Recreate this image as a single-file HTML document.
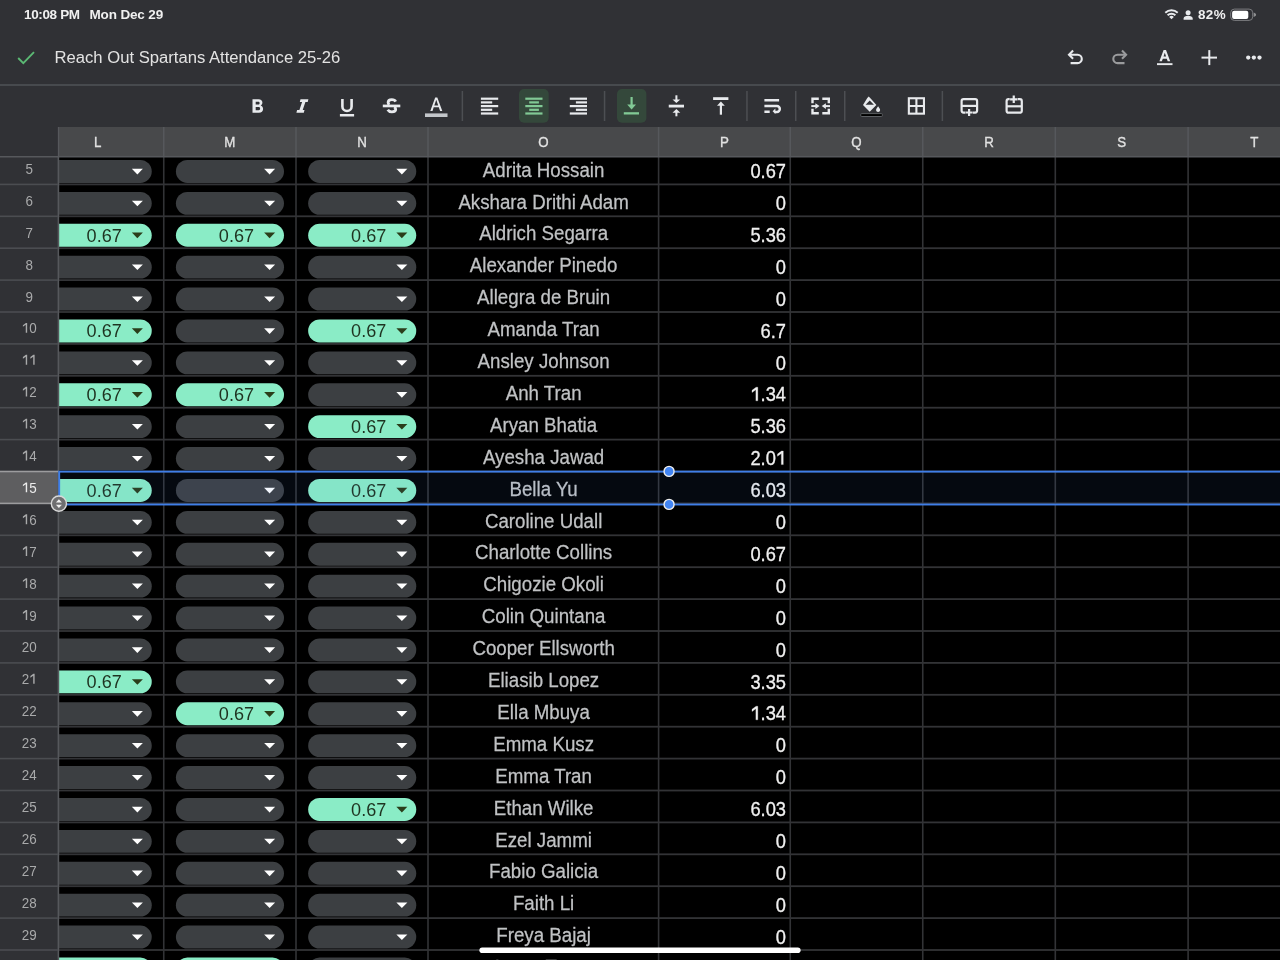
<!DOCTYPE html><html><head><meta charset="utf-8"><style>
*{margin:0;padding:0;box-sizing:border-box}
html,body{width:1280px;height:960px;overflow:hidden;background:#303135;font-family:"Liberation Sans",sans-serif}
.a{position:absolute}
.t{position:absolute;white-space:nowrap;line-height:1}
svg text{font-family:"Liberation Sans",sans-serif}
svg{will-change:transform}
</style></head><body>
<svg class="a" style="left:0;top:0" width="1280" height="960" viewBox="0 0 1280 960">
<rect x="58" y="127" width="1222" height="30" fill="#48494b"/>
<rect x="59" y="157" width="1221" height="803" fill="#000"/>
<rect x="163.00" y="127" width="1.5" height="30" fill="#56585c"/>
<rect x="162.95" y="157" width="1.6" height="803" fill="#323336"/>
<rect x="295.25" y="127" width="1.5" height="30" fill="#56585c"/>
<rect x="295.20" y="157" width="1.6" height="803" fill="#323336"/>
<rect x="427.25" y="127" width="1.5" height="30" fill="#56585c"/>
<rect x="427.20" y="157" width="1.6" height="803" fill="#323336"/>
<rect x="657.85" y="127" width="1.5" height="30" fill="#56585c"/>
<rect x="657.80" y="157" width="1.6" height="803" fill="#323336"/>
<rect x="789.50" y="127" width="1.5" height="30" fill="#56585c"/>
<rect x="789.45" y="157" width="1.6" height="803" fill="#323336"/>
<rect x="922.00" y="127" width="1.5" height="30" fill="#56585c"/>
<rect x="921.95" y="157" width="1.6" height="803" fill="#323336"/>
<rect x="1054.55" y="127" width="1.5" height="30" fill="#56585c"/>
<rect x="1054.50" y="157" width="1.6" height="803" fill="#323336"/>
<rect x="1187.35" y="127" width="1.5" height="30" fill="#56585c"/>
<rect x="1187.30" y="157" width="1.6" height="803" fill="#323336"/>
<rect x="59" y="183.50" width="1221" height="1.8" fill="#323336"/>
<rect x="59" y="215.40" width="1221" height="1.8" fill="#323336"/>
<rect x="59" y="247.30" width="1221" height="1.8" fill="#323336"/>
<rect x="59" y="279.20" width="1221" height="1.8" fill="#323336"/>
<rect x="59" y="311.10" width="1221" height="1.8" fill="#323336"/>
<rect x="59" y="343.00" width="1221" height="1.8" fill="#323336"/>
<rect x="59" y="374.90" width="1221" height="1.8" fill="#323336"/>
<rect x="59" y="406.80" width="1221" height="1.8" fill="#323336"/>
<rect x="59" y="438.70" width="1221" height="1.8" fill="#323336"/>
<rect x="59" y="470.60" width="1221" height="1.8" fill="#323336"/>
<rect x="59" y="502.50" width="1221" height="1.8" fill="#323336"/>
<rect x="59" y="534.40" width="1221" height="1.8" fill="#323336"/>
<rect x="59" y="566.30" width="1221" height="1.8" fill="#323336"/>
<rect x="59" y="598.20" width="1221" height="1.8" fill="#323336"/>
<rect x="59" y="630.10" width="1221" height="1.8" fill="#323336"/>
<rect x="59" y="662.00" width="1221" height="1.8" fill="#323336"/>
<rect x="59" y="693.90" width="1221" height="1.8" fill="#323336"/>
<rect x="59" y="725.80" width="1221" height="1.8" fill="#323336"/>
<rect x="59" y="757.70" width="1221" height="1.8" fill="#323336"/>
<rect x="59" y="789.60" width="1221" height="1.8" fill="#323336"/>
<rect x="59" y="821.50" width="1221" height="1.8" fill="#323336"/>
<rect x="59" y="853.40" width="1221" height="1.8" fill="#323336"/>
<rect x="59" y="885.30" width="1221" height="1.8" fill="#323336"/>
<rect x="59" y="917.20" width="1221" height="1.8" fill="#323336"/>
<rect x="59" y="949.10" width="1221" height="1.8" fill="#323336"/>
<rect x="43.65" y="160.00" width="108.10" height="22.90" rx="11.45" fill="#3c3f42"/>
<path d="M131.85 168.80 h11.00 l-5.50 5.60 z" fill="#ffffff"/>
<rect x="175.90" y="160.00" width="108.10" height="22.90" rx="11.45" fill="#3c3f42"/>
<path d="M264.10 168.80 h11.00 l-5.50 5.60 z" fill="#ffffff"/>
<rect x="308.15" y="160.00" width="108.10" height="22.90" rx="11.45" fill="#3c3f42"/>
<path d="M396.35 168.80 h11.00 l-5.50 5.60 z" fill="#ffffff"/>
<text transform="translate(543.60 176.60) scale(0.945 1)" font-size="19.8" fill="#c0c2c4" stroke="#c0c2c4" stroke-width="0.25" text-anchor="middle">Adrita Hossain</text>
<g transform="translate(750.41 178.10) scale(0.925 1)" fill="#f0f0f0" stroke="#f0f0f0" stroke-width="0.30"><text x="0.00" y="0" font-size="19.80">0.67</text></g>
<rect x="43.65" y="191.90" width="108.10" height="22.90" rx="11.45" fill="#3c3f42"/>
<path d="M131.85 200.70 h11.00 l-5.50 5.60 z" fill="#ffffff"/>
<rect x="175.90" y="191.90" width="108.10" height="22.90" rx="11.45" fill="#3c3f42"/>
<path d="M264.10 200.70 h11.00 l-5.50 5.60 z" fill="#ffffff"/>
<rect x="308.15" y="191.90" width="108.10" height="22.90" rx="11.45" fill="#3c3f42"/>
<path d="M396.35 200.70 h11.00 l-5.50 5.60 z" fill="#ffffff"/>
<text transform="translate(543.60 208.50) scale(0.945 1)" font-size="19.8" fill="#c0c2c4" stroke="#c0c2c4" stroke-width="0.25" text-anchor="middle">Akshara Drithi Adam</text>
<g transform="translate(775.87 210.00) scale(0.925 1)" fill="#f0f0f0" stroke="#f0f0f0" stroke-width="0.30"><text x="0.00" y="0" font-size="19.80">0</text></g>
<rect x="43.65" y="223.80" width="108.10" height="22.90" rx="11.45" fill="#8aecc6"/>
<path d="M131.85 232.60 h11.00 l-5.50 5.60 z" fill="#2a3d1a"/>
<text transform="translate(121.85 241.60) scale(0.99 1)" font-size="18.3" fill="#1e3320" text-anchor="end">0.67</text>
<rect x="175.90" y="223.80" width="108.10" height="22.90" rx="11.45" fill="#8aecc6"/>
<path d="M264.10 232.60 h11.00 l-5.50 5.60 z" fill="#2a3d1a"/>
<text transform="translate(254.10 241.60) scale(0.99 1)" font-size="18.3" fill="#1e3320" text-anchor="end">0.67</text>
<rect x="308.15" y="223.80" width="108.10" height="22.90" rx="11.45" fill="#8aecc6"/>
<path d="M396.35 232.60 h11.00 l-5.50 5.60 z" fill="#2a3d1a"/>
<text transform="translate(386.35 241.60) scale(0.99 1)" font-size="18.3" fill="#1e3320" text-anchor="end">0.67</text>
<text transform="translate(543.60 240.40) scale(0.945 1)" font-size="19.8" fill="#c0c2c4" stroke="#c0c2c4" stroke-width="0.25" text-anchor="middle">Aldrich Segarra</text>
<g transform="translate(750.41 241.90) scale(0.925 1)" fill="#f0f0f0" stroke="#f0f0f0" stroke-width="0.30"><text x="0.00" y="0" font-size="19.80">5.36</text></g>
<rect x="43.65" y="255.70" width="108.10" height="22.90" rx="11.45" fill="#3c3f42"/>
<path d="M131.85 264.50 h11.00 l-5.50 5.60 z" fill="#ffffff"/>
<rect x="175.90" y="255.70" width="108.10" height="22.90" rx="11.45" fill="#3c3f42"/>
<path d="M264.10 264.50 h11.00 l-5.50 5.60 z" fill="#ffffff"/>
<rect x="308.15" y="255.70" width="108.10" height="22.90" rx="11.45" fill="#3c3f42"/>
<path d="M396.35 264.50 h11.00 l-5.50 5.60 z" fill="#ffffff"/>
<text transform="translate(543.60 272.30) scale(0.945 1)" font-size="19.8" fill="#c0c2c4" stroke="#c0c2c4" stroke-width="0.25" text-anchor="middle">Alexander Pinedo</text>
<g transform="translate(775.87 273.80) scale(0.925 1)" fill="#f0f0f0" stroke="#f0f0f0" stroke-width="0.30"><text x="0.00" y="0" font-size="19.80">0</text></g>
<rect x="43.65" y="287.60" width="108.10" height="22.90" rx="11.45" fill="#3c3f42"/>
<path d="M131.85 296.40 h11.00 l-5.50 5.60 z" fill="#ffffff"/>
<rect x="175.90" y="287.60" width="108.10" height="22.90" rx="11.45" fill="#3c3f42"/>
<path d="M264.10 296.40 h11.00 l-5.50 5.60 z" fill="#ffffff"/>
<rect x="308.15" y="287.60" width="108.10" height="22.90" rx="11.45" fill="#3c3f42"/>
<path d="M396.35 296.40 h11.00 l-5.50 5.60 z" fill="#ffffff"/>
<text transform="translate(543.60 304.20) scale(0.945 1)" font-size="19.8" fill="#c0c2c4" stroke="#c0c2c4" stroke-width="0.25" text-anchor="middle">Allegra de Bruin</text>
<g transform="translate(775.87 305.70) scale(0.925 1)" fill="#f0f0f0" stroke="#f0f0f0" stroke-width="0.30"><text x="0.00" y="0" font-size="19.80">0</text></g>
<rect x="43.65" y="319.50" width="108.10" height="22.90" rx="11.45" fill="#8aecc6"/>
<path d="M131.85 328.30 h11.00 l-5.50 5.60 z" fill="#2a3d1a"/>
<text transform="translate(121.85 337.30) scale(0.99 1)" font-size="18.3" fill="#1e3320" text-anchor="end">0.67</text>
<rect x="175.90" y="319.50" width="108.10" height="22.90" rx="11.45" fill="#3c3f42"/>
<path d="M264.10 328.30 h11.00 l-5.50 5.60 z" fill="#ffffff"/>
<rect x="308.15" y="319.50" width="108.10" height="22.90" rx="11.45" fill="#8aecc6"/>
<path d="M396.35 328.30 h11.00 l-5.50 5.60 z" fill="#2a3d1a"/>
<text transform="translate(386.35 337.30) scale(0.99 1)" font-size="18.3" fill="#1e3320" text-anchor="end">0.67</text>
<text transform="translate(543.60 336.10) scale(0.945 1)" font-size="19.8" fill="#c0c2c4" stroke="#c0c2c4" stroke-width="0.25" text-anchor="middle">Amanda Tran</text>
<g transform="translate(760.59 337.60) scale(0.925 1)" fill="#f0f0f0" stroke="#f0f0f0" stroke-width="0.30"><text x="0.00" y="0" font-size="19.80">6.7</text></g>
<rect x="43.65" y="351.40" width="108.10" height="22.90" rx="11.45" fill="#3c3f42"/>
<path d="M131.85 360.20 h11.00 l-5.50 5.60 z" fill="#ffffff"/>
<rect x="175.90" y="351.40" width="108.10" height="22.90" rx="11.45" fill="#3c3f42"/>
<path d="M264.10 360.20 h11.00 l-5.50 5.60 z" fill="#ffffff"/>
<rect x="308.15" y="351.40" width="108.10" height="22.90" rx="11.45" fill="#3c3f42"/>
<path d="M396.35 360.20 h11.00 l-5.50 5.60 z" fill="#ffffff"/>
<text transform="translate(543.60 368.00) scale(0.945 1)" font-size="19.8" fill="#c0c2c4" stroke="#c0c2c4" stroke-width="0.25" text-anchor="middle">Ansley Johnson</text>
<g transform="translate(775.87 369.50) scale(0.925 1)" fill="#f0f0f0" stroke="#f0f0f0" stroke-width="0.30"><text x="0.00" y="0" font-size="19.80">0</text></g>
<rect x="43.65" y="383.30" width="108.10" height="22.90" rx="11.45" fill="#8aecc6"/>
<path d="M131.85 392.10 h11.00 l-5.50 5.60 z" fill="#2a3d1a"/>
<text transform="translate(121.85 401.10) scale(0.99 1)" font-size="18.3" fill="#1e3320" text-anchor="end">0.67</text>
<rect x="175.90" y="383.30" width="108.10" height="22.90" rx="11.45" fill="#8aecc6"/>
<path d="M264.10 392.10 h11.00 l-5.50 5.60 z" fill="#2a3d1a"/>
<text transform="translate(254.10 401.10) scale(0.99 1)" font-size="18.3" fill="#1e3320" text-anchor="end">0.67</text>
<rect x="308.15" y="383.30" width="108.10" height="22.90" rx="11.45" fill="#3c3f42"/>
<path d="M396.35 392.10 h11.00 l-5.50 5.60 z" fill="#ffffff"/>
<text transform="translate(543.60 399.90) scale(0.945 1)" font-size="19.8" fill="#c0c2c4" stroke="#c0c2c4" stroke-width="0.25" text-anchor="middle">Anh Tran</text>
<g transform="translate(750.41 401.40) scale(0.925 1)" fill="#f0f0f0" stroke="#f0f0f0" stroke-width="0.30"><path d="M8.00 -14.18 V-0.6 H5.92 V-11.58 L1.72 -8.91 V-11.09 L6.14 -14.18 Z"/><text x="11.01" y="0" font-size="19.80">.34</text></g>
<rect x="43.65" y="415.20" width="108.10" height="22.90" rx="11.45" fill="#3c3f42"/>
<path d="M131.85 424.00 h11.00 l-5.50 5.60 z" fill="#ffffff"/>
<rect x="175.90" y="415.20" width="108.10" height="22.90" rx="11.45" fill="#3c3f42"/>
<path d="M264.10 424.00 h11.00 l-5.50 5.60 z" fill="#ffffff"/>
<rect x="308.15" y="415.20" width="108.10" height="22.90" rx="11.45" fill="#8aecc6"/>
<path d="M396.35 424.00 h11.00 l-5.50 5.60 z" fill="#2a3d1a"/>
<text transform="translate(386.35 433.00) scale(0.99 1)" font-size="18.3" fill="#1e3320" text-anchor="end">0.67</text>
<text transform="translate(543.60 431.80) scale(0.945 1)" font-size="19.8" fill="#c0c2c4" stroke="#c0c2c4" stroke-width="0.25" text-anchor="middle">Aryan Bhatia</text>
<g transform="translate(750.41 433.30) scale(0.925 1)" fill="#f0f0f0" stroke="#f0f0f0" stroke-width="0.30"><text x="0.00" y="0" font-size="19.80">5.36</text></g>
<rect x="43.65" y="447.10" width="108.10" height="22.90" rx="11.45" fill="#3c3f42"/>
<path d="M131.85 455.90 h11.00 l-5.50 5.60 z" fill="#ffffff"/>
<rect x="175.90" y="447.10" width="108.10" height="22.90" rx="11.45" fill="#3c3f42"/>
<path d="M264.10 455.90 h11.00 l-5.50 5.60 z" fill="#ffffff"/>
<rect x="308.15" y="447.10" width="108.10" height="22.90" rx="11.45" fill="#3c3f42"/>
<path d="M396.35 455.90 h11.00 l-5.50 5.60 z" fill="#ffffff"/>
<text transform="translate(543.60 463.70) scale(0.945 1)" font-size="19.8" fill="#c0c2c4" stroke="#c0c2c4" stroke-width="0.25" text-anchor="middle">Ayesha Jawad</text>
<g transform="translate(750.41 465.20) scale(0.925 1)" fill="#f0f0f0" stroke="#f0f0f0" stroke-width="0.30"><text x="0.00" y="0" font-size="19.80">2.0</text><path d="M35.52 -14.18 V-0.6 H33.44 V-11.58 L29.24 -8.91 V-11.09 L33.66 -14.18 Z"/></g>
<rect x="43.65" y="479.00" width="108.10" height="22.90" rx="11.45" fill="#8aecc6"/>
<path d="M131.85 487.80 h11.00 l-5.50 5.60 z" fill="#2a3d1a"/>
<text transform="translate(121.85 496.80) scale(0.99 1)" font-size="18.3" fill="#1e3320" text-anchor="end">0.67</text>
<rect x="175.90" y="479.00" width="108.10" height="22.90" rx="11.45" fill="#3c3f42"/>
<path d="M264.10 487.80 h11.00 l-5.50 5.60 z" fill="#ffffff"/>
<rect x="308.15" y="479.00" width="108.10" height="22.90" rx="11.45" fill="#8aecc6"/>
<path d="M396.35 487.80 h11.00 l-5.50 5.60 z" fill="#2a3d1a"/>
<text transform="translate(386.35 496.80) scale(0.99 1)" font-size="18.3" fill="#1e3320" text-anchor="end">0.67</text>
<text transform="translate(543.60 495.60) scale(0.945 1)" font-size="19.8" fill="#c0c2c4" stroke="#c0c2c4" stroke-width="0.25" text-anchor="middle">Bella Yu</text>
<g transform="translate(750.41 497.10) scale(0.925 1)" fill="#f0f0f0" stroke="#f0f0f0" stroke-width="0.30"><text x="0.00" y="0" font-size="19.80">6.03</text></g>
<rect x="43.65" y="510.90" width="108.10" height="22.90" rx="11.45" fill="#3c3f42"/>
<path d="M131.85 519.70 h11.00 l-5.50 5.60 z" fill="#ffffff"/>
<rect x="175.90" y="510.90" width="108.10" height="22.90" rx="11.45" fill="#3c3f42"/>
<path d="M264.10 519.70 h11.00 l-5.50 5.60 z" fill="#ffffff"/>
<rect x="308.15" y="510.90" width="108.10" height="22.90" rx="11.45" fill="#3c3f42"/>
<path d="M396.35 519.70 h11.00 l-5.50 5.60 z" fill="#ffffff"/>
<text transform="translate(543.60 527.50) scale(0.945 1)" font-size="19.8" fill="#c0c2c4" stroke="#c0c2c4" stroke-width="0.25" text-anchor="middle">Caroline Udall</text>
<g transform="translate(775.87 529.00) scale(0.925 1)" fill="#f0f0f0" stroke="#f0f0f0" stroke-width="0.30"><text x="0.00" y="0" font-size="19.80">0</text></g>
<rect x="43.65" y="542.80" width="108.10" height="22.90" rx="11.45" fill="#3c3f42"/>
<path d="M131.85 551.60 h11.00 l-5.50 5.60 z" fill="#ffffff"/>
<rect x="175.90" y="542.80" width="108.10" height="22.90" rx="11.45" fill="#3c3f42"/>
<path d="M264.10 551.60 h11.00 l-5.50 5.60 z" fill="#ffffff"/>
<rect x="308.15" y="542.80" width="108.10" height="22.90" rx="11.45" fill="#3c3f42"/>
<path d="M396.35 551.60 h11.00 l-5.50 5.60 z" fill="#ffffff"/>
<text transform="translate(543.60 559.40) scale(0.945 1)" font-size="19.8" fill="#c0c2c4" stroke="#c0c2c4" stroke-width="0.25" text-anchor="middle">Charlotte Collins</text>
<g transform="translate(750.41 560.90) scale(0.925 1)" fill="#f0f0f0" stroke="#f0f0f0" stroke-width="0.30"><text x="0.00" y="0" font-size="19.80">0.67</text></g>
<rect x="43.65" y="574.70" width="108.10" height="22.90" rx="11.45" fill="#3c3f42"/>
<path d="M131.85 583.50 h11.00 l-5.50 5.60 z" fill="#ffffff"/>
<rect x="175.90" y="574.70" width="108.10" height="22.90" rx="11.45" fill="#3c3f42"/>
<path d="M264.10 583.50 h11.00 l-5.50 5.60 z" fill="#ffffff"/>
<rect x="308.15" y="574.70" width="108.10" height="22.90" rx="11.45" fill="#3c3f42"/>
<path d="M396.35 583.50 h11.00 l-5.50 5.60 z" fill="#ffffff"/>
<text transform="translate(543.60 591.30) scale(0.945 1)" font-size="19.8" fill="#c0c2c4" stroke="#c0c2c4" stroke-width="0.25" text-anchor="middle">Chigozie Okoli</text>
<g transform="translate(775.87 592.80) scale(0.925 1)" fill="#f0f0f0" stroke="#f0f0f0" stroke-width="0.30"><text x="0.00" y="0" font-size="19.80">0</text></g>
<rect x="43.65" y="606.60" width="108.10" height="22.90" rx="11.45" fill="#3c3f42"/>
<path d="M131.85 615.40 h11.00 l-5.50 5.60 z" fill="#ffffff"/>
<rect x="175.90" y="606.60" width="108.10" height="22.90" rx="11.45" fill="#3c3f42"/>
<path d="M264.10 615.40 h11.00 l-5.50 5.60 z" fill="#ffffff"/>
<rect x="308.15" y="606.60" width="108.10" height="22.90" rx="11.45" fill="#3c3f42"/>
<path d="M396.35 615.40 h11.00 l-5.50 5.60 z" fill="#ffffff"/>
<text transform="translate(543.60 623.20) scale(0.945 1)" font-size="19.8" fill="#c0c2c4" stroke="#c0c2c4" stroke-width="0.25" text-anchor="middle">Colin Quintana</text>
<g transform="translate(775.87 624.70) scale(0.925 1)" fill="#f0f0f0" stroke="#f0f0f0" stroke-width="0.30"><text x="0.00" y="0" font-size="19.80">0</text></g>
<rect x="43.65" y="638.50" width="108.10" height="22.90" rx="11.45" fill="#3c3f42"/>
<path d="M131.85 647.30 h11.00 l-5.50 5.60 z" fill="#ffffff"/>
<rect x="175.90" y="638.50" width="108.10" height="22.90" rx="11.45" fill="#3c3f42"/>
<path d="M264.10 647.30 h11.00 l-5.50 5.60 z" fill="#ffffff"/>
<rect x="308.15" y="638.50" width="108.10" height="22.90" rx="11.45" fill="#3c3f42"/>
<path d="M396.35 647.30 h11.00 l-5.50 5.60 z" fill="#ffffff"/>
<text transform="translate(543.60 655.10) scale(0.945 1)" font-size="19.8" fill="#c0c2c4" stroke="#c0c2c4" stroke-width="0.25" text-anchor="middle">Cooper Ellsworth</text>
<g transform="translate(775.87 656.60) scale(0.925 1)" fill="#f0f0f0" stroke="#f0f0f0" stroke-width="0.30"><text x="0.00" y="0" font-size="19.80">0</text></g>
<rect x="43.65" y="670.40" width="108.10" height="22.90" rx="11.45" fill="#8aecc6"/>
<path d="M131.85 679.20 h11.00 l-5.50 5.60 z" fill="#2a3d1a"/>
<text transform="translate(121.85 688.20) scale(0.99 1)" font-size="18.3" fill="#1e3320" text-anchor="end">0.67</text>
<rect x="175.90" y="670.40" width="108.10" height="22.90" rx="11.45" fill="#3c3f42"/>
<path d="M264.10 679.20 h11.00 l-5.50 5.60 z" fill="#ffffff"/>
<rect x="308.15" y="670.40" width="108.10" height="22.90" rx="11.45" fill="#3c3f42"/>
<path d="M396.35 679.20 h11.00 l-5.50 5.60 z" fill="#ffffff"/>
<text transform="translate(543.60 687.00) scale(0.945 1)" font-size="19.8" fill="#c0c2c4" stroke="#c0c2c4" stroke-width="0.25" text-anchor="middle">Eliasib Lopez</text>
<g transform="translate(750.41 688.50) scale(0.925 1)" fill="#f0f0f0" stroke="#f0f0f0" stroke-width="0.30"><text x="0.00" y="0" font-size="19.80">3.35</text></g>
<rect x="43.65" y="702.30" width="108.10" height="22.90" rx="11.45" fill="#3c3f42"/>
<path d="M131.85 711.10 h11.00 l-5.50 5.60 z" fill="#ffffff"/>
<rect x="175.90" y="702.30" width="108.10" height="22.90" rx="11.45" fill="#8aecc6"/>
<path d="M264.10 711.10 h11.00 l-5.50 5.60 z" fill="#2a3d1a"/>
<text transform="translate(254.10 720.10) scale(0.99 1)" font-size="18.3" fill="#1e3320" text-anchor="end">0.67</text>
<rect x="308.15" y="702.30" width="108.10" height="22.90" rx="11.45" fill="#3c3f42"/>
<path d="M396.35 711.10 h11.00 l-5.50 5.60 z" fill="#ffffff"/>
<text transform="translate(543.60 718.90) scale(0.945 1)" font-size="19.8" fill="#c0c2c4" stroke="#c0c2c4" stroke-width="0.25" text-anchor="middle">Ella Mbuya</text>
<g transform="translate(750.41 720.40) scale(0.925 1)" fill="#f0f0f0" stroke="#f0f0f0" stroke-width="0.30"><path d="M8.00 -14.18 V-0.6 H5.92 V-11.58 L1.72 -8.91 V-11.09 L6.14 -14.18 Z"/><text x="11.01" y="0" font-size="19.80">.34</text></g>
<rect x="43.65" y="734.20" width="108.10" height="22.90" rx="11.45" fill="#3c3f42"/>
<path d="M131.85 743.00 h11.00 l-5.50 5.60 z" fill="#ffffff"/>
<rect x="175.90" y="734.20" width="108.10" height="22.90" rx="11.45" fill="#3c3f42"/>
<path d="M264.10 743.00 h11.00 l-5.50 5.60 z" fill="#ffffff"/>
<rect x="308.15" y="734.20" width="108.10" height="22.90" rx="11.45" fill="#3c3f42"/>
<path d="M396.35 743.00 h11.00 l-5.50 5.60 z" fill="#ffffff"/>
<text transform="translate(543.60 750.80) scale(0.945 1)" font-size="19.8" fill="#c0c2c4" stroke="#c0c2c4" stroke-width="0.25" text-anchor="middle">Emma Kusz</text>
<g transform="translate(775.87 752.30) scale(0.925 1)" fill="#f0f0f0" stroke="#f0f0f0" stroke-width="0.30"><text x="0.00" y="0" font-size="19.80">0</text></g>
<rect x="43.65" y="766.10" width="108.10" height="22.90" rx="11.45" fill="#3c3f42"/>
<path d="M131.85 774.90 h11.00 l-5.50 5.60 z" fill="#ffffff"/>
<rect x="175.90" y="766.10" width="108.10" height="22.90" rx="11.45" fill="#3c3f42"/>
<path d="M264.10 774.90 h11.00 l-5.50 5.60 z" fill="#ffffff"/>
<rect x="308.15" y="766.10" width="108.10" height="22.90" rx="11.45" fill="#3c3f42"/>
<path d="M396.35 774.90 h11.00 l-5.50 5.60 z" fill="#ffffff"/>
<text transform="translate(543.60 782.70) scale(0.945 1)" font-size="19.8" fill="#c0c2c4" stroke="#c0c2c4" stroke-width="0.25" text-anchor="middle">Emma Tran</text>
<g transform="translate(775.87 784.20) scale(0.925 1)" fill="#f0f0f0" stroke="#f0f0f0" stroke-width="0.30"><text x="0.00" y="0" font-size="19.80">0</text></g>
<rect x="43.65" y="798.00" width="108.10" height="22.90" rx="11.45" fill="#3c3f42"/>
<path d="M131.85 806.80 h11.00 l-5.50 5.60 z" fill="#ffffff"/>
<rect x="175.90" y="798.00" width="108.10" height="22.90" rx="11.45" fill="#3c3f42"/>
<path d="M264.10 806.80 h11.00 l-5.50 5.60 z" fill="#ffffff"/>
<rect x="308.15" y="798.00" width="108.10" height="22.90" rx="11.45" fill="#8aecc6"/>
<path d="M396.35 806.80 h11.00 l-5.50 5.60 z" fill="#2a3d1a"/>
<text transform="translate(386.35 815.80) scale(0.99 1)" font-size="18.3" fill="#1e3320" text-anchor="end">0.67</text>
<text transform="translate(543.60 814.60) scale(0.945 1)" font-size="19.8" fill="#c0c2c4" stroke="#c0c2c4" stroke-width="0.25" text-anchor="middle">Ethan Wilke</text>
<g transform="translate(750.41 816.10) scale(0.925 1)" fill="#f0f0f0" stroke="#f0f0f0" stroke-width="0.30"><text x="0.00" y="0" font-size="19.80">6.03</text></g>
<rect x="43.65" y="829.90" width="108.10" height="22.90" rx="11.45" fill="#3c3f42"/>
<path d="M131.85 838.70 h11.00 l-5.50 5.60 z" fill="#ffffff"/>
<rect x="175.90" y="829.90" width="108.10" height="22.90" rx="11.45" fill="#3c3f42"/>
<path d="M264.10 838.70 h11.00 l-5.50 5.60 z" fill="#ffffff"/>
<rect x="308.15" y="829.90" width="108.10" height="22.90" rx="11.45" fill="#3c3f42"/>
<path d="M396.35 838.70 h11.00 l-5.50 5.60 z" fill="#ffffff"/>
<text transform="translate(543.60 846.50) scale(0.945 1)" font-size="19.8" fill="#c0c2c4" stroke="#c0c2c4" stroke-width="0.25" text-anchor="middle">Ezel Jammi</text>
<g transform="translate(775.87 848.00) scale(0.925 1)" fill="#f0f0f0" stroke="#f0f0f0" stroke-width="0.30"><text x="0.00" y="0" font-size="19.80">0</text></g>
<rect x="43.65" y="861.80" width="108.10" height="22.90" rx="11.45" fill="#3c3f42"/>
<path d="M131.85 870.60 h11.00 l-5.50 5.60 z" fill="#ffffff"/>
<rect x="175.90" y="861.80" width="108.10" height="22.90" rx="11.45" fill="#3c3f42"/>
<path d="M264.10 870.60 h11.00 l-5.50 5.60 z" fill="#ffffff"/>
<rect x="308.15" y="861.80" width="108.10" height="22.90" rx="11.45" fill="#3c3f42"/>
<path d="M396.35 870.60 h11.00 l-5.50 5.60 z" fill="#ffffff"/>
<text transform="translate(543.60 878.40) scale(0.945 1)" font-size="19.8" fill="#c0c2c4" stroke="#c0c2c4" stroke-width="0.25" text-anchor="middle">Fabio Galicia</text>
<g transform="translate(775.87 879.90) scale(0.925 1)" fill="#f0f0f0" stroke="#f0f0f0" stroke-width="0.30"><text x="0.00" y="0" font-size="19.80">0</text></g>
<rect x="43.65" y="893.70" width="108.10" height="22.90" rx="11.45" fill="#3c3f42"/>
<path d="M131.85 902.50 h11.00 l-5.50 5.60 z" fill="#ffffff"/>
<rect x="175.90" y="893.70" width="108.10" height="22.90" rx="11.45" fill="#3c3f42"/>
<path d="M264.10 902.50 h11.00 l-5.50 5.60 z" fill="#ffffff"/>
<rect x="308.15" y="893.70" width="108.10" height="22.90" rx="11.45" fill="#3c3f42"/>
<path d="M396.35 902.50 h11.00 l-5.50 5.60 z" fill="#ffffff"/>
<text transform="translate(543.60 910.30) scale(0.945 1)" font-size="19.8" fill="#c0c2c4" stroke="#c0c2c4" stroke-width="0.25" text-anchor="middle">Faith Li</text>
<g transform="translate(775.87 911.80) scale(0.925 1)" fill="#f0f0f0" stroke="#f0f0f0" stroke-width="0.30"><text x="0.00" y="0" font-size="19.80">0</text></g>
<rect x="43.65" y="925.60" width="108.10" height="22.90" rx="11.45" fill="#3c3f42"/>
<path d="M131.85 934.40 h11.00 l-5.50 5.60 z" fill="#ffffff"/>
<rect x="175.90" y="925.60" width="108.10" height="22.90" rx="11.45" fill="#3c3f42"/>
<path d="M264.10 934.40 h11.00 l-5.50 5.60 z" fill="#ffffff"/>
<rect x="308.15" y="925.60" width="108.10" height="22.90" rx="11.45" fill="#3c3f42"/>
<path d="M396.35 934.40 h11.00 l-5.50 5.60 z" fill="#ffffff"/>
<text transform="translate(543.60 942.20) scale(0.945 1)" font-size="19.8" fill="#c0c2c4" stroke="#c0c2c4" stroke-width="0.25" text-anchor="middle">Freya Bajaj</text>
<g transform="translate(775.87 943.70) scale(0.925 1)" fill="#f0f0f0" stroke="#f0f0f0" stroke-width="0.30"><text x="0.00" y="0" font-size="19.80">0</text></g>
<rect x="43.65" y="957.50" width="108.10" height="22.90" rx="11.45" fill="#8aecc6"/>
<path d="M131.85 966.30 h11.00 l-5.50 5.60 z" fill="#2a3d1a"/>
<text transform="translate(121.85 975.30) scale(0.99 1)" font-size="18.3" fill="#1e3320" text-anchor="end">0.67</text>
<rect x="175.90" y="957.50" width="108.10" height="22.90" rx="11.45" fill="#8aecc6"/>
<path d="M264.10 966.30 h11.00 l-5.50 5.60 z" fill="#2a3d1a"/>
<text transform="translate(254.10 975.30) scale(0.99 1)" font-size="18.3" fill="#1e3320" text-anchor="end">0.67</text>
<rect x="308.15" y="957.50" width="108.10" height="22.90" rx="11.45" fill="#3c3f42"/>
<path d="M396.35 966.30 h11.00 l-5.50 5.60 z" fill="#ffffff"/>
<text transform="translate(543.60 974.10) scale(0.945 1)" font-size="19.8" fill="#c0c2c4" stroke="#c0c2c4" stroke-width="0.25" text-anchor="middle">Grace Torres</text>
<g transform="translate(775.87 975.60) scale(0.925 1)" fill="#f0f0f0" stroke="#f0f0f0" stroke-width="0.30"><text x="0.00" y="0" font-size="19.80">0</text></g>
<rect x="59" y="471.50" width="1221" height="31.90" fill="rgb(75,130,235)" fill-opacity="0.065"/>
<rect x="0" y="157" width="58.2" height="803" fill="#303135"/>
<rect x="0" y="471.50" width="58.2" height="31.90" fill="#5e5e60"/>
<rect x="57.6" y="127" width="1.6" height="833" fill="#56585c"/>
<rect x="0" y="183.60" width="58" height="1.6" fill="#4b4d51"/>
<rect x="0" y="215.50" width="58" height="1.6" fill="#4b4d51"/>
<rect x="0" y="247.40" width="58" height="1.6" fill="#4b4d51"/>
<rect x="0" y="279.30" width="58" height="1.6" fill="#4b4d51"/>
<rect x="0" y="311.20" width="58" height="1.6" fill="#4b4d51"/>
<rect x="0" y="343.10" width="58" height="1.6" fill="#4b4d51"/>
<rect x="0" y="375.00" width="58" height="1.6" fill="#4b4d51"/>
<rect x="0" y="406.90" width="58" height="1.6" fill="#4b4d51"/>
<rect x="0" y="438.80" width="58" height="1.6" fill="#4b4d51"/>
<rect x="0" y="470.70" width="58" height="1.6" fill="#9c9c9e"/>
<rect x="0" y="502.60" width="58" height="1.6" fill="#9c9c9e"/>
<rect x="0" y="534.50" width="58" height="1.6" fill="#4b4d51"/>
<rect x="0" y="566.40" width="58" height="1.6" fill="#4b4d51"/>
<rect x="0" y="598.30" width="58" height="1.6" fill="#4b4d51"/>
<rect x="0" y="630.20" width="58" height="1.6" fill="#4b4d51"/>
<rect x="0" y="662.10" width="58" height="1.6" fill="#4b4d51"/>
<rect x="0" y="694.00" width="58" height="1.6" fill="#4b4d51"/>
<rect x="0" y="725.90" width="58" height="1.6" fill="#4b4d51"/>
<rect x="0" y="757.80" width="58" height="1.6" fill="#4b4d51"/>
<rect x="0" y="789.70" width="58" height="1.6" fill="#4b4d51"/>
<rect x="0" y="821.60" width="58" height="1.6" fill="#4b4d51"/>
<rect x="0" y="853.50" width="58" height="1.6" fill="#4b4d51"/>
<rect x="0" y="885.40" width="58" height="1.6" fill="#4b4d51"/>
<rect x="0" y="917.30" width="58" height="1.6" fill="#4b4d51"/>
<rect x="0" y="949.20" width="58" height="1.6" fill="#4b4d51"/>
<g transform="translate(25.47 173.90) scale(0.920 1)" fill="#a9aaab" stroke="#a9aaab" stroke-width="0.00"><text x="0.00" y="0" font-size="14.60">5</text></g>
<g transform="translate(25.47 205.80) scale(0.920 1)" fill="#a9aaab" stroke="#a9aaab" stroke-width="0.00"><text x="0.00" y="0" font-size="14.60">6</text></g>
<g transform="translate(25.47 237.70) scale(0.920 1)" fill="#a9aaab" stroke="#a9aaab" stroke-width="0.00"><text x="0.00" y="0" font-size="14.60">7</text></g>
<g transform="translate(25.47 269.60) scale(0.920 1)" fill="#a9aaab" stroke="#a9aaab" stroke-width="0.00"><text x="0.00" y="0" font-size="14.60">8</text></g>
<g transform="translate(25.47 301.50) scale(0.920 1)" fill="#a9aaab" stroke="#a9aaab" stroke-width="0.00"><text x="0.00" y="0" font-size="14.60">9</text></g>
<g transform="translate(21.73 333.40) scale(0.920 1)" fill="#a9aaab" stroke="#a9aaab" stroke-width="0.00"><path d="M5.90 -10.45 V-0.6 H4.37 V-8.54 L1.27 -6.57 V-8.18 L4.53 -10.45 Z"/><text x="8.12" y="0" font-size="14.60">0</text></g>
<g transform="translate(21.73 365.30) scale(0.920 1)" fill="#a9aaab" stroke="#a9aaab" stroke-width="0.00"><path d="M5.90 -10.45 V-0.6 H4.37 V-8.54 L1.27 -6.57 V-8.18 L4.53 -10.45 Z"/><path d="M14.02 -10.45 V-0.6 H12.48 V-8.54 L9.39 -6.57 V-8.18 L12.64 -10.45 Z"/></g>
<g transform="translate(21.73 397.20) scale(0.920 1)" fill="#a9aaab" stroke="#a9aaab" stroke-width="0.00"><path d="M5.90 -10.45 V-0.6 H4.37 V-8.54 L1.27 -6.57 V-8.18 L4.53 -10.45 Z"/><text x="8.12" y="0" font-size="14.60">2</text></g>
<g transform="translate(21.73 429.10) scale(0.920 1)" fill="#a9aaab" stroke="#a9aaab" stroke-width="0.00"><path d="M5.90 -10.45 V-0.6 H4.37 V-8.54 L1.27 -6.57 V-8.18 L4.53 -10.45 Z"/><text x="8.12" y="0" font-size="14.60">3</text></g>
<g transform="translate(21.73 461.00) scale(0.920 1)" fill="#a9aaab" stroke="#a9aaab" stroke-width="0.00"><path d="M5.90 -10.45 V-0.6 H4.37 V-8.54 L1.27 -6.57 V-8.18 L4.53 -10.45 Z"/><text x="8.12" y="0" font-size="14.60">4</text></g>
<g transform="translate(21.73 492.90) scale(0.920 1)" fill="#ececec" stroke="#ececec" stroke-width="0.00"><path d="M5.90 -10.45 V-0.6 H4.37 V-8.54 L1.27 -6.57 V-8.18 L4.53 -10.45 Z"/><text x="8.12" y="0" font-size="14.60">5</text></g>
<g transform="translate(21.73 524.80) scale(0.920 1)" fill="#a9aaab" stroke="#a9aaab" stroke-width="0.00"><path d="M5.90 -10.45 V-0.6 H4.37 V-8.54 L1.27 -6.57 V-8.18 L4.53 -10.45 Z"/><text x="8.12" y="0" font-size="14.60">6</text></g>
<g transform="translate(21.73 556.70) scale(0.920 1)" fill="#a9aaab" stroke="#a9aaab" stroke-width="0.00"><path d="M5.90 -10.45 V-0.6 H4.37 V-8.54 L1.27 -6.57 V-8.18 L4.53 -10.45 Z"/><text x="8.12" y="0" font-size="14.60">7</text></g>
<g transform="translate(21.73 588.60) scale(0.920 1)" fill="#a9aaab" stroke="#a9aaab" stroke-width="0.00"><path d="M5.90 -10.45 V-0.6 H4.37 V-8.54 L1.27 -6.57 V-8.18 L4.53 -10.45 Z"/><text x="8.12" y="0" font-size="14.60">8</text></g>
<g transform="translate(21.73 620.50) scale(0.920 1)" fill="#a9aaab" stroke="#a9aaab" stroke-width="0.00"><path d="M5.90 -10.45 V-0.6 H4.37 V-8.54 L1.27 -6.57 V-8.18 L4.53 -10.45 Z"/><text x="8.12" y="0" font-size="14.60">9</text></g>
<g transform="translate(21.73 652.40) scale(0.920 1)" fill="#a9aaab" stroke="#a9aaab" stroke-width="0.00"><text x="0.00" y="0" font-size="14.60">20</text></g>
<g transform="translate(21.73 684.30) scale(0.920 1)" fill="#a9aaab" stroke="#a9aaab" stroke-width="0.00"><text x="0.00" y="0" font-size="14.60">2</text><path d="M14.02 -10.45 V-0.6 H12.48 V-8.54 L9.39 -6.57 V-8.18 L12.64 -10.45 Z"/></g>
<g transform="translate(21.73 716.20) scale(0.920 1)" fill="#a9aaab" stroke="#a9aaab" stroke-width="0.00"><text x="0.00" y="0" font-size="14.60">22</text></g>
<g transform="translate(21.73 748.10) scale(0.920 1)" fill="#a9aaab" stroke="#a9aaab" stroke-width="0.00"><text x="0.00" y="0" font-size="14.60">23</text></g>
<g transform="translate(21.73 780.00) scale(0.920 1)" fill="#a9aaab" stroke="#a9aaab" stroke-width="0.00"><text x="0.00" y="0" font-size="14.60">24</text></g>
<g transform="translate(21.73 811.90) scale(0.920 1)" fill="#a9aaab" stroke="#a9aaab" stroke-width="0.00"><text x="0.00" y="0" font-size="14.60">25</text></g>
<g transform="translate(21.73 843.80) scale(0.920 1)" fill="#a9aaab" stroke="#a9aaab" stroke-width="0.00"><text x="0.00" y="0" font-size="14.60">26</text></g>
<g transform="translate(21.73 875.70) scale(0.920 1)" fill="#a9aaab" stroke="#a9aaab" stroke-width="0.00"><text x="0.00" y="0" font-size="14.60">27</text></g>
<g transform="translate(21.73 907.60) scale(0.920 1)" fill="#a9aaab" stroke="#a9aaab" stroke-width="0.00"><text x="0.00" y="0" font-size="14.60">28</text></g>
<g transform="translate(21.73 939.50) scale(0.920 1)" fill="#a9aaab" stroke="#a9aaab" stroke-width="0.00"><text x="0.00" y="0" font-size="14.60">29</text></g>
<g transform="translate(21.73 971.40) scale(0.920 1)" fill="#a9aaab" stroke="#a9aaab" stroke-width="0.00"><text x="0.00" y="0" font-size="14.60">30</text></g>
<rect x="0" y="155.9" width="1280" height="1.6" fill="#56585c"/>
<rect x="0" y="86" width="1280" height="41" fill="#303135"/>
<rect x="0" y="127" width="57.6" height="29" fill="#303135"/>
<text transform="translate(97.62 147.2) scale(0.86 1)" font-size="15.5" fill="#e2e2e2" stroke="#e2e2e2" stroke-width="0.35" text-anchor="middle">L</text>
<text transform="translate(229.88 147.2) scale(0.86 1)" font-size="15.5" fill="#e2e2e2" stroke="#e2e2e2" stroke-width="0.35" text-anchor="middle">M</text>
<text transform="translate(362.00 147.2) scale(0.86 1)" font-size="15.5" fill="#e2e2e2" stroke="#e2e2e2" stroke-width="0.35" text-anchor="middle">N</text>
<text transform="translate(543.30 147.2) scale(0.86 1)" font-size="15.5" fill="#e2e2e2" stroke="#e2e2e2" stroke-width="0.35" text-anchor="middle">O</text>
<text transform="translate(724.42 147.2) scale(0.86 1)" font-size="15.5" fill="#e2e2e2" stroke="#e2e2e2" stroke-width="0.35" text-anchor="middle">P</text>
<text transform="translate(856.50 147.2) scale(0.86 1)" font-size="15.5" fill="#e2e2e2" stroke="#e2e2e2" stroke-width="0.35" text-anchor="middle">Q</text>
<text transform="translate(989.02 147.2) scale(0.86 1)" font-size="15.5" fill="#e2e2e2" stroke="#e2e2e2" stroke-width="0.35" text-anchor="middle">R</text>
<text transform="translate(1121.70 147.2) scale(0.86 1)" font-size="15.5" fill="#e2e2e2" stroke="#e2e2e2" stroke-width="0.35" text-anchor="middle">S</text>
<text transform="translate(1254.25 147.2) scale(0.86 1)" font-size="15.5" fill="#e2e2e2" stroke="#e2e2e2" stroke-width="0.35" text-anchor="middle">T</text>
<rect x="59.2" y="471.60" width="1230" height="32.90" fill="none" stroke="#3f7ee8" stroke-width="1.9"/>
<circle cx="669.06" cy="471.40" r="5" fill="#4285f4" stroke="#eeeeee" stroke-width="1.4"/>
<circle cx="669.06" cy="504.40" r="5" fill="#4285f4" stroke="#eeeeee" stroke-width="1.4"/>
<circle cx="58.9" cy="503.6" r="7.6" fill="#6e6e70" stroke="#d9d9d9" stroke-width="1.4"/>
<path d="M55.9 502.5 L58.9 499.3 L61.9 502.5 Z M55.9 504.7 L58.9 507.9 L61.9 504.7 Z" fill="#f0f0f0"/>
<rect x="479.4" y="947.5" width="321.2" height="5.6" rx="2.8" fill="#ffffff"/>
</svg>
<svg class="a" style="left:0;top:0" width="1280" height="126" viewBox="0 0 1280 126">
<g fill="#e8eaed">
<!-- wifi -->
<path d="M1171.5 19.3 L1169.2 16.9 A3.3 3.3 0 0 1 1173.8 16.9 Z"/>
</g>
<g fill="none" stroke="#e8eaed" stroke-width="1.9">
<path d="M1167.6 15.3 A5.6 5.6 0 0 1 1175.4 15.3"/>
<path d="M1165.3 12.8 A8.9 8.9 0 0 1 1177.7 12.8"/>
</g>
<g fill="#e8eaed">
<!-- person -->
<circle cx="1188.1" cy="12.7" r="2.5"/>
<path d="M1183.6 19.8 V18.6 C1183.6 16.6 1185.6 15.8 1188.1 15.8 C1190.6 15.8 1192.7 16.6 1192.7 18.6 V19.8 Z"/>
<!-- battery -->
<rect x="1232.1" y="10.7" width="16.2" height="8.4" rx="2" fill="#ffffff"/>
<path d="M1253.6 12.6 C1255.2 13 1256.1 13.9 1256.1 14.75 C1256.1 15.6 1255.2 16.5 1253.6 16.9 Z" fill="#8d8e90"/>
</g>
<rect x="1230.7" y="9.1" width="22" height="11.3" rx="3.6" fill="none" stroke="#7c7d80" stroke-width="1"/>

<!-- checkmark -->
<path d="M18.2 58 L23.3 63.2 L34 52.2" fill="none" stroke="#5bb974" stroke-width="1.9"/>

<!-- undo -->
<g fill="none" stroke="#e8eaed" stroke-width="2.1">
<path d="M1073.1 50.6 L1069 54.7 L1073.1 58.8"/>
<path d="M1069.2 54.7 H1077.6 A4.2 4.2 0 0 1 1077.6 63.1 H1070.6"/>
</g>
<!-- redo -->
<g fill="none" stroke="#9a9b9d" stroke-width="2.1">
<path d="M1122 50.6 L1126.1 54.7 L1122 58.8"/>
<path d="M1125.9 54.7 H1117.5 A4.2 4.2 0 0 0 1117.5 63.1 H1124.5"/>
</g>
<!-- text format A -->
<path d="M1159.4 61.3 L1163.6 50.1 H1166 L1170.2 61.3 H1167.7 L1166.8 58.7 H1162.8 L1161.9 61.3 Z M1163.5 56.6 H1166.1 L1164.8 52.8 Z" fill="#e8eaed" fill-rule="evenodd"/>
<rect x="1157" y="63.2" width="15.5" height="1.9" fill="#e8eaed"/>
<!-- plus -->
<rect x="1201.5" y="56.6" width="15.5" height="2" fill="#e8eaed"/>
<rect x="1208.3" y="50.1" width="2" height="15" fill="#e8eaed"/>
<!-- dots -->
<circle cx="1248.2" cy="57.6" r="2.15" fill="#e8eaed"/>
<circle cx="1253.85" cy="57.6" r="2.15" fill="#e8eaed"/>
<circle cx="1259.5" cy="57.6" r="2.15" fill="#e8eaed"/>

<!-- TOOLBAR -->
<!-- bold -->
<path fill="#e8eaed" fill-rule="evenodd" d="M252.5 99.2 H258.5 C261 99.2 262.4 100.6 262.4 102.6 C262.4 103.9 261.7 104.9 260.7 105.5 C262.1 106 263.1 107.3 263.1 109.1 C263.1 111.3 261.5 112.8 258.9 112.8 H252.5 Z M255.7 101.8 V104.5 H258.3 C259.1 104.5 259.6 104 259.6 103.15 C259.6 102.3 259.1 101.8 258.3 101.8 Z M255.7 106.9 V110.2 H258.6 C259.6 110.2 260.1 109.6 260.1 108.55 C260.1 107.5 259.6 106.9 258.6 106.9 Z"/>
<!-- italic -->
<path fill="#e8eaed" d="M300.5 99.2 H308.4 L307.7 101.9 H305.4 L302.7 110.1 H304.5 L303.8 112.8 H296.4 L297.1 110.1 H299.4 L302.1 101.9 H299.8 Z"/>
<!-- underline -->
<path fill="none" stroke="#e8eaed" stroke-width="2.6" d="M342.4 99.1 V106.4 A4.6 4.6 0 0 0 351.6 106.4 V99.1"/>
<rect x="339.9" y="114" width="14.2" height="2.5" fill="#e8eaed"/>
<!-- strikethrough -->
<path fill="none" stroke="#e8eaed" stroke-width="2.8" d="M395.7 101.6 C395 100.2 393.6 99.7 391.8 99.7 C389.6 99.7 388.1 100.9 388.1 102.6 C388.1 103.6 388.6 104.3 389.4 104.8"/>
<path fill="none" stroke="#e8eaed" stroke-width="2.8" d="M394.2 107 C395.1 107.6 395.7 108.4 395.7 109.3 C395.7 110.9 394.2 111.8 391.9 111.8 C389.9 111.8 388.5 111.1 387.7 109.8"/>
<rect x="382.8" y="104.6" width="17.5" height="2.7" fill="#e8eaed"/>
<!-- text color A -->
<path d="M430.3 111 L435.2 97.4 H437.3 L442.3 111 H440.1 L438.8 107.3 H433.7 L432.5 111 Z M434.3 105.4 H438.2 L436.25 99.8 Z" fill="#e8eaed" fill-rule="evenodd"/>
<rect x="425" y="113.4" width="22.5" height="3.6" fill="#c3c6ca"/>
<!-- separators -->
<g fill="#4d4f53">
<rect x="461.6" y="91" width="1.5" height="30"/>
<rect x="603.8" y="91" width="1.5" height="30"/>
<rect x="746.2" y="91" width="1.5" height="30"/>
<rect x="795" y="91" width="1.5" height="30"/>
<rect x="844" y="91" width="1.5" height="30"/>
<rect x="941.6" y="91" width="1.5" height="30"/>
</g>
<!-- align left -->
<g fill="#e8eaed">
<rect x="480.9" y="97.6" width="17.3" height="2.2"/>
<rect x="480.9" y="101.3" width="11.3" height="2.2"/>
<rect x="480.9" y="105" width="17.3" height="2.2"/>
<rect x="480.9" y="108.7" width="11.3" height="2.2"/>
<rect x="480.9" y="112.4" width="17.3" height="2.2"/>
</g>
<!-- align center (active) -->
<rect x="519" y="89" width="29.7" height="33.7" rx="5" fill="#34483b"/>
<g fill="#81c995">
<rect x="525.3" y="97.6" width="17.2" height="2.2"/>
<rect x="529.2" y="101.3" width="9.7" height="2.2"/>
<rect x="525.3" y="105" width="17.2" height="2.2"/>
<rect x="529.2" y="108.7" width="9.7" height="2.2"/>
<rect x="525.3" y="112.4" width="17.2" height="2.2"/>
</g>
<!-- align right -->
<g fill="#e8eaed">
<rect x="569.8" y="97.6" width="17.2" height="2.2"/>
<rect x="575.9" y="101.3" width="11.1" height="2.2"/>
<rect x="569.8" y="105" width="17.2" height="2.2"/>
<rect x="575.9" y="108.7" width="11.1" height="2.2"/>
<rect x="569.8" y="112.4" width="17.2" height="2.2"/>
</g>
<!-- valign bottom (active) -->
<rect x="617" y="89" width="29.4" height="33.7" rx="5" fill="#34483b"/>
<g fill="#81c995">
<rect x="630.5" y="97" width="2.2" height="9"/>
<path d="M627.2 104.6 H636 L631.6 109.6 Z"/>
<rect x="623.8" y="112.2" width="15.2" height="2.3"/>
</g>
<!-- valign middle -->
<g fill="#e8eaed">
<rect x="668.75" y="104.7" width="15.25" height="2.8"/>
<rect x="675.4" y="95.3" width="2" height="5"/>
<path d="M672.5 99.4 H680.3 L676.4 103.1 Z"/>
<path d="M672.5 112.8 H680.3 L676.4 109 Z"/>
<rect x="675.4" y="112" width="2" height="4.3"/>
</g>
<!-- valign top -->
<g fill="#e8eaed">
<rect x="713.1" y="97.2" width="15.3" height="2.8"/>
<path d="M717 105.8 H724.8 L720.9 101.6 Z"/>
<rect x="719.8" y="105" width="2.2" height="9.7"/>
</g>
<!-- wrap -->
<g fill="#e8eaed">
<rect x="764.4" y="99" width="14.7" height="2.5"/>
<rect x="764.4" y="110.5" width="5.3" height="2.5"/>
<path d="M772.6 111.3 L775.4 108.6 V114.1 Z"/>
</g>
<path fill="none" stroke="#e8eaed" stroke-width="2.5" d="M764.4 106.1 H776.9 A2.9 2.9 0 0 1 776.9 111.9 H774.6"/>
<!-- merge -->
<g fill="none" stroke="#e8eaed" stroke-width="2.4">
<path d="M818.8 98.7 H812.5 V103.2"/>
<path d="M812.5 108.7 V113.2 H818.8"/>
<path d="M822.3 98.7 H828.8 V103.2"/>
<path d="M828.8 108.7 V113.2 H822.3"/>
</g>
<g fill="#e8eaed">
<rect x="811.3" y="105.1" width="5" height="2"/>
<path d="M815.4 103.3 L819.5 106.1 L815.4 108.9 Z"/>
<rect x="825" y="105.1" width="5" height="2"/>
<path d="M825.9 103.3 L821.7 106.1 L825.9 108.9 Z"/>
</g>
<!-- fill color -->
<path fill="#e8eaed" fill-rule="evenodd" d="M867.3 97.9 L868.7 96.6 L870.9 98.8 L876.4 104.9 L869.7 111.7 L863 104.9 Z M865.6 104.7 H873.9 L869.75 100.6 Z"/>
<path fill="#e8eaed" d="M878.1 106.3 C879 107.6 880.1 108.9 880.1 109.9 C880.1 111.1 879.2 111.9 878.1 111.9 C877 111.9 876.1 111.1 876.1 109.9 C876.1 108.9 877.2 107.6 878.1 106.3 Z"/>
<rect x="860.8" y="113.6" width="21.5" height="2.9" rx="0.6" fill="#000" stroke="#5c5f63" stroke-width="1"/>
<!-- borders -->
<g fill="none" stroke="#e8eaed" stroke-width="2.1">
<rect x="908.85" y="98.25" width="15.1" height="15.4"/>
<path d="M916.4 98.2 V113.7 M908.8 105.95 H924"/>
</g>
<!-- insert row below -->
<g fill="none" stroke="#e8eaed" stroke-width="2.2">
<path d="M965.3 112.6 H963.6 A2 2 0 0 1 961.6 110.6 V101.1 A2 2 0 0 1 963.6 99.1 H975.1 A2 2 0 0 1 977.1 101.1 V110.6 A2 2 0 0 1 975.1 112.6 H973"/>
<path d="M961.6 105.9 H977.1"/>
<path d="M969.1 108.9 V116 M965.5 112.5 H972.7"/>
</g>
<!-- insert row above -->
<g fill="none" stroke="#e8eaed" stroke-width="2.2">
<path d="M1009.7 99.2 H1008.6 A2 2 0 0 0 1006.6 101.2 V110.7 A2 2 0 0 0 1008.6 112.7 H1019.8 A2 2 0 0 0 1021.8 110.7 V101.2 A2 2 0 0 0 1019.8 99.2 H1017.7"/>
<path d="M1006.6 106.3 H1021.8"/>
<path d="M1013.75 95.6 V103 M1010.1 99.4 H1017.4"/>
</g>
</svg>
<div class="t" style="left:24px;top:7.6px;font-size:13.5px;font-weight:bold;color:#f0f0f0;letter-spacing:-0.35px">10:08 PM</div>
<div class="t" style="left:89.5px;top:7.6px;font-size:13.5px;font-weight:bold;color:#f0f0f0;letter-spacing:-0.15px">Mon Dec 29</div>
<div class="t" style="left:1198px;top:8px;font-size:13.4px;font-weight:bold;letter-spacing:0.4px;color:#f0f0f0">82%</div>
<div class="a" style="left:0;top:84px;width:1280px;height:2px;background:#474a4e"></div>
<div class="t" style="left:54.5px;top:49.5px;font-size:16.65px;color:#e3e3e3">Reach Out Spartans Attendance 25-26</div>
</body></html>
